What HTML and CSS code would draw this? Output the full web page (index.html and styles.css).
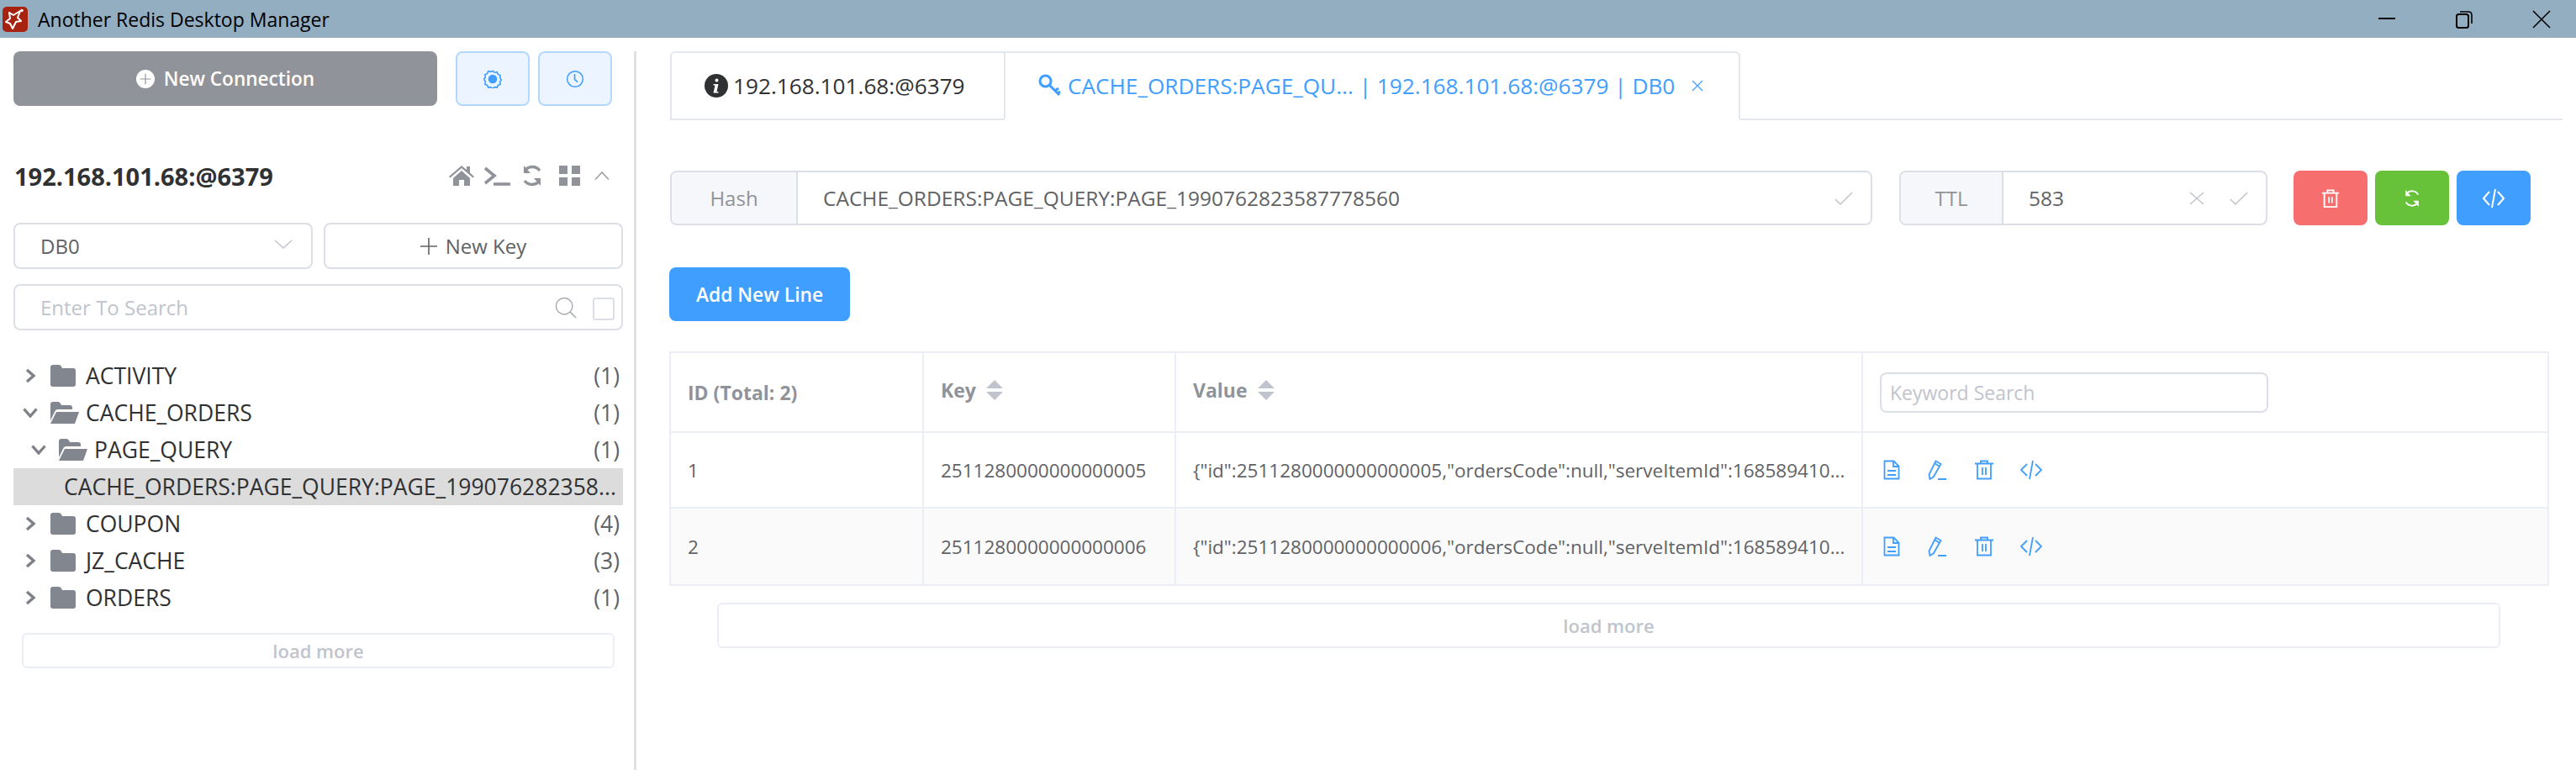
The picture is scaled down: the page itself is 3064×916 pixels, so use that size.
FILE: index.html
```html
<!DOCTYPE html>
<html lang="en">
<head>
<meta charset="utf-8">
<title>Another Redis Desktop Manager</title>
<link rel="stylesheet" href="styles.css">
</head>
<body>
<header class="titlebar">
  <svg class="app-logo" viewBox="0 0 30 30"><rect width="30" height="30" rx="5" fill="#a8230f"/><path d="M8 7l5 3 8-5-3 8 4 4-6 1-4 8-3-6-5-2 5-4z" fill="none" stroke="#fff" stroke-width="2" stroke-linejoin="round"/><circle cx="23" cy="4.500" r="1.800" fill="#fff"/></svg>
  <span class="app-title">Another Redis Desktop Manager</span>
  <div class="win-controls">
    <svg class="win-ico" viewBox="0 0 22 22"><path d="M1 10h20" stroke="#000" stroke-width="2"/></svg>
    <svg class="win-ico" viewBox="0 0 22 22"><rect x="2" y="5" width="14" height="16" rx="2.500" fill="none" stroke="#000" stroke-width="2"/><path d="M6 2h10q4 0 4 4v10" fill="none" stroke="#000" stroke-width="1.600"/></svg>
    <svg class="win-ico" viewBox="0 0 22 22"><path d="M1 1l20 20M21 1L1 21" stroke="#000" stroke-width="1.600"/></svg>
  </div>
</header>
<main class="main">
  <aside class="sidebar">
    <div class="top-row">
      <button class="new-conn"><svg class="plus-ico" viewBox="0 0 28 28"><circle cx="14" cy="14" r="14" fill="#fff"/><path d="M14 6v16M6 14h16" stroke="#909399" stroke-width="1.500"/></svg>New Connection</button>
      <button class="plain-btn"><svg class="btn-ico" viewBox="0 0 24 24"><path d="M12 1.500l2.500 2 3.200-.6 1.200 3 3 1.400-.4 3.200 1.700 2.500-1.700 2.500.4 3.200-3 1.400-1.200 3-3.200-.6-2.500 2-2.500-2-3.200.6-1.200-3-3-1.400.4-3.200L.8 12l1.700-2.500-.4-3.200 3-1.400 1.200-3 3.200.6z" fill="none" stroke="#409eff" stroke-width="1.800"/><circle cx="12" cy="12" r="5.800" fill="#409eff"/></svg></button>
      <button class="plain-btn"><svg class="btn-ico" viewBox="0 0 24 24"><circle cx="12" cy="12" r="10.200" fill="none" stroke="#409eff" stroke-width="1.600"/><path d="M11.500 5.500v7l3.800 3.500" fill="none" stroke="#409eff" stroke-width="1.800"/></svg></button>
    </div>
    <div class="conn-row">
      <span class="conn-name">192.168.101.68:@6379</span>
      <div class="conn-icons">
        <svg class="ci-home" viewBox="0 0 30 24"><path d="M15 0L0 13l1.500 1.500L15 3l13.500 11.500L30 13l-5-4.500V1h-4v4zM5 15v9h7v-7h6v7h7v-9L15 6z" fill="#909399"/></svg>
        <svg class="ci-term" viewBox="0 0 32 24"><path d="M2 3l11 9-11 9" fill="none" stroke="#909399" stroke-width="3.600"/><path d="M12 22h20" stroke="#909399" stroke-width="3.600"/></svg>
        <svg class="ci-sync" viewBox="0 0 26 26"><path d="M22 7A11 11 0 0 0 4 7.500M4 19a11 11 0 0 0 18-.5" fill="none" stroke="#909399" stroke-width="3.400"/><path d="M3 1v9h8zM23 25v-9h-8z" fill="#909399"/></svg>
        <svg class="ci-grid" viewBox="0 0 25 24"><path d="M0 0h10v10H0zM15 0h10v10H15zM0 14h10v10H0zM15 14h10v10H15z" fill="#909399"/></svg>
        <svg class="ci-up" viewBox="0 0 18 10"><path d="M1 9.500L9 1l8 8.500" fill="none" stroke="#909399" stroke-width="1.300"/></svg>
      </div>
    </div>
    <div class="db-row">
      <div class="field db-select"><span class="db-text">DB0</span><svg class="chev-down" viewBox="0 0 22 11"><path d="M1 1l10 9L21 1" fill="none" stroke="#c0c4cc" stroke-width="1.400"/></svg></div>
      <button class="new-key"><svg class="nk-plus" viewBox="0 0 20 20"><path d="M10 0v20M0 10h20" stroke="#606266" stroke-width="1.600"/></svg>New Key</button>
    </div>
    <div class="field search-box">
      <span class="placeholder">Enter To Search</span>
      <svg class="search-ico" viewBox="0 0 28 28"><circle cx="12" cy="12" r="10.500" fill="none" stroke="#a8abb2" stroke-width="1.600"/><path d="M19.500 19.500L27 27" stroke="#a8abb2" stroke-width="1.600"/></svg>
      <span class="checkbox"></span>
    </div>
    <ul class="tree">
      <li class="tree-row"><svg class="arrow" viewBox="0 0 14 16"><path d="M2 1l8 7-8 7" fill="none" stroke="#7e8288" stroke-width="3.400"/></svg><svg class="folder" viewBox="0 0 30 26"><path d="M0 3q0-3 3-3h7q2 0 3 2l1 2h13q3 0 3 3v16q0 3-3 3H3q-3 0-3-3z" fill="#82868f"/></svg><span class="name">ACTIVITY</span><span class="count">(1)</span></li>
      <li class="tree-row"><svg class="arrow down" viewBox="0 0 18 12"><path d="M1.500 1.500L9 10l7.500-8.500" fill="none" stroke="#7e8288" stroke-width="3.400"/></svg><svg class="folder open" viewBox="0 0 34 26"><path d="M0 22V3q0-3 3-3h6q2 0 3 2l1 2h10q3 0 3 3v2H9q-3 0-4 3z" fill="#82868f"/><path d="M7 12h27l-5 14H0z" fill="#82868f"/></svg><span class="name">CACHE_ORDERS</span><span class="count">(1)</span></li>
      <li class="tree-row lvl2"><svg class="arrow down" viewBox="0 0 18 12"><path d="M1.500 1.500L9 10l7.500-8.500" fill="none" stroke="#7e8288" stroke-width="3.400"/></svg><svg class="folder open" viewBox="0 0 34 26"><path d="M0 22V3q0-3 3-3h6q2 0 3 2l1 2h10q3 0 3 3v2H9q-3 0-4 3z" fill="#82868f"/><path d="M7 12h27l-5 14H0z" fill="#82868f"/></svg><span class="name">PAGE_QUERY</span><span class="count">(1)</span></li>
      <li class="tree-row selected"><span class="key-name">CACHE_ORDERS:PAGE_QUERY:PAGE_199076282358...</span></li>
      <li class="tree-row"><svg class="arrow" viewBox="0 0 14 16"><path d="M2 1l8 7-8 7" fill="none" stroke="#7e8288" stroke-width="3.400"/></svg><svg class="folder" viewBox="0 0 30 26"><path d="M0 3q0-3 3-3h7q2 0 3 2l1 2h13q3 0 3 3v16q0 3-3 3H3q-3 0-3-3z" fill="#82868f"/></svg><span class="name">COUPON</span><span class="count">(4)</span></li>
      <li class="tree-row"><svg class="arrow" viewBox="0 0 14 16"><path d="M2 1l8 7-8 7" fill="none" stroke="#7e8288" stroke-width="3.400"/></svg><svg class="folder" viewBox="0 0 30 26"><path d="M0 3q0-3 3-3h7q2 0 3 2l1 2h13q3 0 3 3v16q0 3-3 3H3q-3 0-3-3z" fill="#82868f"/></svg><span class="name">JZ_CACHE</span><span class="count">(3)</span></li>
      <li class="tree-row"><svg class="arrow" viewBox="0 0 14 16"><path d="M2 1l8 7-8 7" fill="none" stroke="#7e8288" stroke-width="3.400"/></svg><svg class="folder" viewBox="0 0 30 26"><path d="M0 3q0-3 3-3h7q2 0 3 2l1 2h13q3 0 3 3v16q0 3-3 3H3q-3 0-3-3z" fill="#82868f"/></svg><span class="name">ORDERS</span><span class="count">(1)</span></li>
    </ul>
    <button class="load-more side-more">load more</button>
  </aside>
  <section class="content">
    <nav class="tabs">
      <div class="tab"><svg class="info-ico" viewBox="0 0 28 28"><circle cx="14" cy="14" r="14" fill="#303133"/><path d="M14.500 5.500a2 2 0 1 1 0 4 2 2 0 0 1 0-4zM10.500 12h6l-2 9h2v1.500h-6l2-9h-2z" fill="#fff"/></svg>192.168.101.68:@6379</div>
      <div class="tab active"><svg class="key-ico" viewBox="0 0 28 28"><circle cx="8.500" cy="8.500" r="6.500" fill="none" stroke="#409eff" stroke-width="3"/><path d="M13 13l12 12M20 20l4-3M23 23l3-2" fill="none" stroke="#409eff" stroke-width="3"/></svg>CACHE_ORDERS:PAGE_QU... | 192.168.101.68:@6379 | DB0<svg class="tab-close" viewBox="0 0 14 14"><path d="M1 1l12 12M13 1L1 13" stroke="#409eff" stroke-width="1.200"/></svg></div>
    </nav>
    <div class="key-row">
      <div class="field group key-group"><span class="prepend">Hash</span><span class="value">CACHE_ORDERS:PAGE_QUERY:PAGE_1990762823587778560</span><svg class="check" viewBox="0 0 22 16"><path d="M1 9l6 6L21 1" fill="none" stroke="#c0c4cc" stroke-width="1.500"/></svg></div>
      <div class="field group ttl-group"><span class="prepend ttl-pre">TTL</span><span class="value">583</span><svg class="x-ico" viewBox="0 0 18 16"><path d="M1 1l16 14M17 1L1 15" stroke="#c0c4cc" stroke-width="1.500"/></svg><svg class="check" viewBox="0 0 22 16"><path d="M1 9l6 6L21 1" fill="none" stroke="#c0c4cc" stroke-width="1.500"/></svg></div>
      <div class="actions">
        <button class="act danger"><svg class="act-ico" viewBox="0 0 24 24"><path d="M1 5h22M8 5V1.500h8V5M4 5v18h16V5M10 10v8M14 10v8" fill="none" stroke="#fff" stroke-width="2"/></svg></button>
        <button class="act success"><svg class="act-ico" viewBox="0 0 24 24"><path d="M20 7A9.500 9.500 0 0 0 5 5.500M4 17a9.500 9.500 0 0 0 15 1.500" fill="none" stroke="#fff" stroke-width="2"/><path d="M3.500 1v8h7zM20.500 23v-8h-7z" fill="#fff"/></svg></button>
        <button class="act primary"><svg class="act-ico code" viewBox="0 0 26 24"><path d="M8 4l-7 8 7 8M18 4l7 8-7 8M15 1l-4 22" fill="none" stroke="#fff" stroke-width="2"/></svg></button>
      </div>
    </div>
    <button class="add-line">Add New Line</button>
    <table class="data-table">
      <colgroup><col class="c-id"><col class="c-key"><col class="c-val"><col class="c-op"></colgroup>
      <thead>
        <tr class="head-row">
          <th>ID (Total: 2)</th>
          <th><span class="th-inner">Key<svg class="sort" viewBox="0 0 20 24"><path d="M10 0l10 10H0zM10 24L0 14h20z" fill="#c0c4cc"/></svg></span></th>
          <th><span class="th-inner">Value<svg class="sort" viewBox="0 0 20 24"><path d="M10 0l10 10H0zM10 24L0 14h20z" fill="#c0c4cc"/></svg></span></th>
          <th><span class="kw-search">Keyword Search</span></th>
        </tr>
      </thead>
      <tbody>
        <tr class="row-a">
          <td>1</td><td>2511280000000000005</td>
          <td>{"id":2511280000000000005,"ordersCode":null,"serveItemId":168589410...</td>
          <td><div class="ops">
            <svg class="op" viewBox="0 0 24 24"><path d="M3.500 1.500h11l6 6v15h-17zM14 2v6h6M7 13h10M7 18h10" fill="none" stroke="#409eff" stroke-width="1.800"/></svg>
            <svg class="op" viewBox="0 0 24 24"><path d="M9.500 1.500l6 3.500L7 20l-4.500 3-1-5.500zM8 4l6 4M12 23h10" fill="none" stroke="#409eff" stroke-width="1.800"/></svg>
            <svg class="op" viewBox="0 0 24 24"><path d="M1 4.500h22M8 4.500V1.500h8v3M4 4.500v18h16v-18M10 9v9M14 9v9" fill="none" stroke="#409eff" stroke-width="1.800"/></svg>
            <svg class="op code" viewBox="0 0 26 24"><path d="M8 5l-7 7 7 7M18 5l7 7-7 7M15 1l-4 22" fill="none" stroke="#409eff" stroke-width="1.800"/></svg>
          </div></td>
        </tr>
        <tr class="row-b">
          <td>2</td><td>2511280000000000006</td>
          <td>{"id":2511280000000000006,"ordersCode":null,"serveItemId":168589410...</td>
          <td><div class="ops">
            <svg class="op" viewBox="0 0 24 24"><path d="M3.500 1.500h11l6 6v15h-17zM14 2v6h6M7 13h10M7 18h10" fill="none" stroke="#409eff" stroke-width="1.800"/></svg>
            <svg class="op" viewBox="0 0 24 24"><path d="M9.500 1.500l6 3.500L7 20l-4.500 3-1-5.500zM8 4l6 4M12 23h10" fill="none" stroke="#409eff" stroke-width="1.800"/></svg>
            <svg class="op" viewBox="0 0 24 24"><path d="M1 4.500h22M8 4.500V1.500h8v3M4 4.500v18h16v-18M10 9v9M14 9v9" fill="none" stroke="#409eff" stroke-width="1.800"/></svg>
            <svg class="op code" viewBox="0 0 26 24"><path d="M8 5l-7 7 7 7M18 5l7 7-7 7M15 1l-4 22" fill="none" stroke="#409eff" stroke-width="1.800"/></svg>
          </div></td>
        </tr>
      </tbody>
    </table>
    <button class="load-more table-more">load more</button>
  </section>
</main>
</body>
</html>
```
FILE: styles.css
```css
* { box-sizing: border-box; }
html, body { margin: 0; height: 916px; overflow: hidden; background: #fff; }
body { font-family: "Open Sans", "Liberation Sans", sans-serif; color: #606266; font-size: 24px; }
button { font-family: inherit; cursor: pointer; }
svg { display: block; flex: none; }

.titlebar { height: 45px; background: #93adc1; display: flex; align-items: center; padding-left: 3px; }
.app-logo { width: 30px; height: 30px; }
.app-title { margin-left: 12px; font-size: 23px; color: #000; white-space: nowrap; }
.win-controls { margin-left: auto; display: flex; gap: 70px; padding-right: 30px; }
.win-ico { width: 22px; height: 22px; }

.main { display: flex; padding-top: 16px; height: 871px; }
.sidebar { width: 757px; flex: none; height: 855px; padding-left: 16px; padding-right: 13px; border-right: 3px solid #e2dfdf; }

.top-row { display: flex; height: 65px; }
.new-conn { width: 504px; margin-right: 22px; background: #909399; border: 0; border-radius: 8px; color: #fff; font-size: 22.600px; font-weight: 600; display: flex; align-items: center; justify-content: center; gap: 11px; padding: 0; }
.plus-ico { width: 22px; height: 22px; }
.plain-btn { width: 88px; margin-right: 10px; background: #ecf5ff; border: 2px solid #b3d8ff; border-radius: 8px; display: flex; align-items: center; justify-content: center; padding: 0; }
.btn-ico { width: 22px; height: 22px; }

.conn-row { display: flex; align-items: center; justify-content: space-between; height: 46px; margin-top: 60px; padding-left: 1px; }
.conn-name { font-size: 29px; font-weight: 700; color: #303133; }
.conn-icons { display: flex; align-items: center; padding-right: 16px; }
.ci-home { width: 30px; height: 24px; }
.ci-term { width: 32px; height: 24px; margin-left: 11px; }
.ci-sync { width: 26px; height: 26px; margin-left: 13px; }
.ci-grid { width: 25px; height: 24px; margin-left: 19px; }
.ci-up { width: 18px; height: 10px; margin-left: 17px; }

.field { border: 2px solid #dcdfe6; border-radius: 8px; background: #fff; display: flex; align-items: center; }
.db-row { display: flex; gap: 13px; margin-top: 33px; }
.db-select { width: 356px; height: 55px; padding: 0 22px 0 30px; justify-content: space-between; }
.chev-down { width: 22px; height: 11px; margin-top: -4px; }
.new-key { width: 356px; height: 55px; background: #fff; border: 2px solid #dcdfe6; border-radius: 8px; color: #606266; font-size: 24px; display: flex; align-items: center; justify-content: center; gap: 10px; padding: 0; }
.nk-plus { width: 20px; height: 20px; }

.search-box { height: 55px; margin-top: 18px; padding: 0 8px 0 30px; }
.placeholder { color: #c0c4cc; flex: 1; }
.search-ico { width: 28px; height: 26px; margin-right: 18px; }
.checkbox { width: 26px; height: 27px; border: 2px solid #dcdfe6; border-radius: 3px; margin-top: 3px; }

.tree { list-style: none; margin: 32px 0 0; padding: 0; }
.tree-row { height: 44px; display: flex; align-items: center; padding: 0 4px 0 14px; white-space: nowrap; font-size: 26.500px; color: #303133; }
.arrow { width: 14px; height: 16px; margin-right: 16px; }
.arrow.down { width: 18px; height: 12px; margin-left: -3px; margin-right: 15px; }
.folder { width: 30px; height: 26px; margin-right: 12px; }
.folder.open { width: 34px; margin-right: 8px; }
.count { margin-left: auto; color: #606266; }
.lvl2 { padding-left: 24px; }
.selected { background: #dcdcdc; padding-left: 60px; overflow: hidden; }
.key-name { overflow: hidden; }

.load-more { display: block; background: #fff; border: 2px solid #ebeef5; border-radius: 6px; color: #c0c4cc; font-size: 22px; font-weight: 600; padding: 0; }
.side-more { width: 705px; height: 42px; margin: 20px 0 0 10px; }

.content { flex: none; width: 2251px; margin-left: 40px; }
.tabs { display: flex; height: 82px; border-bottom: 2px solid #e4e7ed; }
.tab { height: 82px; display: flex; align-items: center; white-space: nowrap; color: #303133; border: 2px solid #e4e7ed; background: #fff; font-size: 26.200px; }
.tab:first-child { width: 397px; padding-left: 39px; border-radius: 6px 0 0 0; border-right: 0; }
.tab.active { width: 876px; padding-left: 39px; color: #409eff; border-bottom-color: #fff; border-radius: 0 6px 0 0; }
.info-ico { width: 28px; height: 28px; margin-right: 6px; }
.key-ico { width: 28px; height: 28px; margin-right: 7px; }
.tab-close { width: 14px; height: 14px; margin-left: 20px; }

.key-row { display: flex; margin-top: 60px; width: 2214px; }
.group { height: 65px; overflow: hidden; padding-right: 21px; }
.key-group { width: 1430px; margin-right: 32px; }
.ttl-group { width: 438px; margin-right: 31px; }
.prepend { width: 150px; height: 100%; background: #f5f7fa; color: #909399; border-right: 2px solid #dcdfe6; display: flex; align-items: center; justify-content: center; flex: none; }
.ttl-pre { width: 122px; }
.value { margin-left: 30px; flex: 1; font-size: 24.500px; }
.check { width: 22px; height: 16px; }
.x-ico { width: 18px; height: 16px; margin-right: 30px; }
.actions { display: flex; gap: 9px; }
.act { width: 88px; height: 65px; border: 0; border-radius: 8px; display: flex; align-items: center; justify-content: center; padding: 0; }
.danger { background: #f76e6e; }
.success { background: #67c23a; }
.primary { background: #409eff; }
.act-ico { width: 22px; height: 22px; }
.act-ico.code { width: 26px; height: 24px; }

.add-line { display: block; width: 215px; height: 64px; margin-top: 50px; margin-left: -1px; background: #409eff; border: 0; border-radius: 8px; color: #fff; font-size: 22.800px; font-weight: 600; padding: 0; }

.data-table { margin: 36px 0 0 -1px; width: 2234px; table-layout: fixed; border-collapse: collapse; }
.c-id { width: 301px; }
.c-key { width: 300px; }
.c-val { width: 817px; }
.c-op { width: 816px; }
.data-table th, .data-table td { border: 2px solid #ebeef5; padding: 0 0 0 20px; text-align: left; white-space: nowrap; overflow: hidden; font-size: 22.500px; }
.data-table th { color: #909399; font-weight: 700; font-size: 23px; }
.head-row { height: 95px; }
.row-a { height: 90px; }
.row-b { height: 92px; background: #fafafa; }
.th-inner { display: flex; align-items: center; gap: 12px; margin-top: -6px; }
.sort { width: 20px; height: 24px; }
.kw-search { display: block; width: 462px; height: 48px; line-height: 44px; border: 2px solid #dcdfe6; border-radius: 8px; padding-left: 10px; color: #c0c4cc; font-weight: 400; font-size: 23px; }
.ops { display: flex; gap: 31px; padding-left: 2px; }
.op { width: 24px; height: 24px; }
.op.code { width: 26px; }

.table-more { width: 2121px; height: 54px; margin: 20px 0 0 56px; }
```
